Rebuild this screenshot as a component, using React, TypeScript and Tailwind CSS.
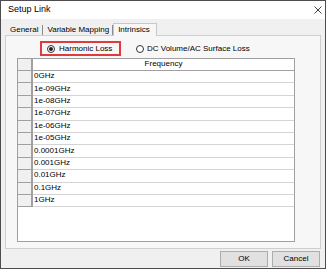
import React from "react";

const rows = ["0GHz","1e-09GHz","1e-08GHz","1e-07GHz","1e-06GHz","1e-05GHz","0.0001GHz","0.001GHz","0.01GHz","0.1GHz","1GHz"];

export default function App() {
  return (
    <div className="w-[326px] h-[269px] flex flex-col border border-[#4d4d4d] bg-[#f0f0f0] text-[8px] text-black overflow-hidden" style={{ fontFamily: '"Liberation Sans", Arial, sans-serif' }}>
      <div className="h-[18px] bg-white flex items-center justify-between pl-[7px] pr-[3px] shrink-0">
        <span className="text-[9px]">Setup Link</span>
        <svg width="8" height="8" viewBox="0 0 8 8"><path d="M0.5 0.5 L7.5 7.5 M7.5 0.5 L0.5 7.5" stroke="#444" strokeWidth="1" /></svg>
      </div>
      <div className="flex flex-col px-[4px] pt-[2px] grow">
        <div className="flex items-end h-[14px] relative z-10 shrink-0">
          <div className="h-[10px] pl-[5px] pr-[4px] flex items-center border-r border-[#8a8a8a] leading-none">General</div>
          <div className="h-[10px] pl-[4px] pr-[3px] flex items-center border-r border-[#8a8a8a] leading-none">Variable Mapping</div>
          <div className="h-[13px] pl-[4px] pr-[6px] flex items-center border border-b-0 border-[#c8c8c8] bg-[#f7f7f7] leading-none -mb-px">Intrinsics</div>
        </div>
        <div className="h-[214px] border border-[#cfcfcf] bg-[#f7f7f7] flex flex-col shrink-0">
          <div className="h-[15px] mt-[5px] flex items-center pl-[34px] shrink-0">
            <div className="w-[81px] h-[15px] border-2 border-[#e0393e] flex items-center pl-[5px] gap-[4px]">
              <span className="w-[8px] h-[8px] rounded-full border border-[#333] bg-white flex items-center justify-center">
                <span className="w-[4px] h-[4px] rounded-full bg-[#222]" />
              </span>
              <span className="leading-none">Harmonic Loss</span>
            </div>
            <div className="flex items-center gap-[3px] ml-[15px]">
              <span className="w-[8px] h-[8px] rounded-full border border-[#333] bg-white" />
              <span className="leading-none">DC Volume/AC Surface Loss</span>
            </div>
          </div>
          <div className="ml-[11px] mt-[2px] w-[278px] h-[184px] border border-[#a0a0a0] bg-white flex flex-col shrink-0">
            <div className="flex h-[12px] shrink-0">
              <div className="w-[15px] bg-[#f0f0f0] border-r-2 border-b border-[#a0a0a0]" />
              <div className="grow border-b border-[#a0a0a0] flex items-center justify-center leading-none pb-px">Frequency</div>
            </div>
            {rows.map((r) => (
              <div key={r} className="flex h-[12.4px] shrink-0">
                <div className="w-[15px] bg-[#f0f0f0] border-r-2 border-b border-[#a0a0a0]" />
                <div className="grow border-b border-[#d4d4d4] flex items-center pl-[1px] leading-none pb-px">{r}</div>
              </div>
            ))}
          </div>
        </div>
        <div className="flex justify-end gap-[4px] mt-[2px] pr-[1px]">
          <div className="w-[48px] h-[16px] border border-[#adadad] bg-[#e1e1e1] flex items-center justify-center leading-none">OK</div>
          <div className="w-[48px] h-[16px] border border-[#adadad] bg-[#e1e1e1] flex items-center justify-center leading-none">Cancel</div>
        </div>
      </div>
    </div>
  );
}
